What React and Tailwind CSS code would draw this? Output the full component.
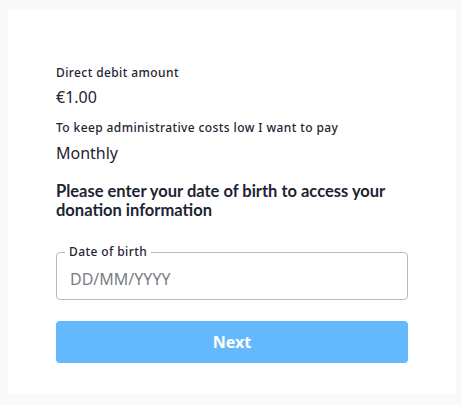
export default function App() {
  return (
    <div className="min-h-[405px] bg-[#f9f9f9] pt-[10px] pl-[8px] pr-[6px] pb-[11px]" style={{ fontFamily: '"Noto Sans", "Open Sans", sans-serif' }}>
      <div className="bg-white px-[48px] pt-[55px] pb-[31px] text-[#1e2433]">
        <div className="text-[12px] leading-[16px] tracking-[0.4px] font-medium">Direct debit amount</div>
        <div className="mt-[6px] text-[16px] leading-[20px]">€1.00</div>
        <div className="mt-[13px] text-[12px] leading-[16px] tracking-[0.4px] font-medium">To keep administrative costs low I want to pay</div>
        <div className="mt-[7px] text-[16px] leading-[20px]">Monthly</div>
        <h2 className="mt-[19px] text-[16.5px] leading-[19px] font-bold" style={{ fontFamily: 'Lato, "Noto Sans", sans-serif' }}>Please enter your date of birth to access your donation information</h2>
        <fieldset className="mt-[24px] border border-[#b3bac8] rounded-[4px] pl-[8px] pr-[12px] pb-[10px]">
          <legend className="px-[4px] text-[12px] leading-[16px] tracking-[0.4px] font-medium">Date of birth</legend>
          <input
            type="text"
            placeholder="DD/MM/YYYY"
            className="block w-full pl-[5px] pt-[9px] text-[16px] leading-[20px] outline-none placeholder:text-[#7a7d85] bg-transparent"
          />
        </fieldset>
        <button className="mt-[21px] w-full h-[42px] rounded-[4px] bg-[#64b9fc] text-white text-[16px] font-bold">Next</button>
      </div>
    </div>
  );
}
